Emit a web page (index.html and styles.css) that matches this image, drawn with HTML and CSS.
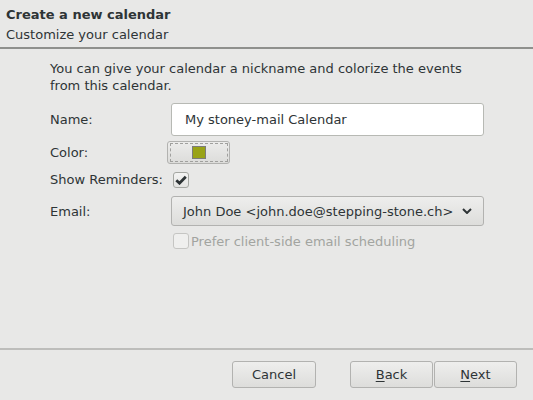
FILE: index.html
```html
<!DOCTYPE html>
<html>
<head>
<meta charset="utf-8">
<link rel="stylesheet" href="styles.css">
</head>
<body>
<div class="dialog">
  <header class="head">
    <div class="title">Create a new calendar</div>
    <div class="subtitle">Customize your calendar</div>
  </header>
  <main class="content">
    <p class="intro">You can give your calendar a nickname and colorize the events from this calendar.</p>
    <div class="form">
      <div class="row r-name">
        <div class="label">Name:</div>
        <div class="input">My stoney-mail Calendar</div>
      </div>
      <div class="row r-color">
        <div class="label">Color:</div>
        <div class="colorbtn"><div class="inner"><span class="swatch"></span></div></div>
      </div>
      <div class="row r-rem">
        <div class="label">Show Reminders:</div>
        <span class="check checked"><svg width="12" height="10" viewBox="0 0 12 10"><path d="M1.3 5.2 L4.5 8.2 L10.8 1.8" fill="none" stroke="#2e3436" stroke-width="2.8"/></svg></span>
      </div>
      <div class="row r-email">
        <div class="label">Email:</div>
        <div class="select"><span>John Doe &lt;john.doe@stepping-stone.ch&gt;</span><svg width="10" height="6" viewBox="0 0 10 6"><path d="M1 1 L5 5 L9 1" fill="none" stroke="#2e3436" stroke-width="2"/></svg></div>
      </div>
      <div class="row r-prefer">
        <div class="label"></div>
        <div class="prefer"><span class="check disabled"></span><span>Prefer client-side email scheduling</span></div>
      </div>
    </div>
  </main>
  <footer class="foot">
    <button class="btn cancel">Cancel</button>
    <div class="navpair">
      <button class="btn"><u>B</u>ack</button>
      <button class="btn"><u>N</u>ext</button>
    </div>
  </footer>
</div>
</body>
</html>
```
FILE: styles.css
```css
html, body {
  margin: 0;
  padding: 0;
}
body {
  width: 533px;
  height: 400px;
  background: #e8e8e7;
  font-family: "DejaVu Sans", sans-serif;
  font-size: 13px;
  color: #2e3436;
  overflow: hidden;
}
.dialog {
  display: flex;
  flex-direction: column;
  height: 400px;
}
.head {
  height: 49px;
  padding: 6px 0 0 6px;
  box-sizing: border-box;
  border-bottom: 2px solid #8f908d;
}
.title {
  font-weight: bold;
  line-height: 17px;
}
.subtitle {
  line-height: 17px;
  margin-top: 3px;
}
.content {
  flex: 1;
  padding: 11px 48px 0 50px;
  border-bottom: 2px solid #bdbdbb;
}
.intro {
  margin: 0;
  line-height: 17px;
  width: 440px;
}
.form {
  display: flex;
  flex-direction: column;
  margin-top: 9px;
}
.row {
  display: flex;
  align-items: center;
}
.label {
  width: 121px;
  flex: none;
  line-height: 17px;
}
.r-color { margin-top: 5px; }
.r-rem { margin-top: 7px; }
.r-email { margin-top: 8px; }
.r-prefer { margin-top: 7px; }
.input {
  width: 313px;
  height: 33px;
  box-sizing: border-box;
  background: #fff;
  border: 1px solid #b7b9b4;
  border-radius: 3px;
  padding: 0 13px;
  line-height: 31px;
}
.colorbtn {
  margin-left: -4px;
  width: 63px;
  height: 23px;
  box-sizing: border-box;
  border: 1px solid #b2b2b0;
  border-radius: 3px;
  background: linear-gradient(#ececeb, #dcdcda);
  padding: 1px 1px 1px 2px;
}
.colorbtn .inner {
  height: 19px;
  box-sizing: border-box;
  border: 1px dashed #a0a09e;
  display: flex;
  justify-content: center;
  align-items: center;
}
.swatch {
  width: 14px;
  height: 13px;
  box-sizing: border-box;
  background: #99a316;
  border: 1px solid #7c7c7a;
}
.check {
  width: 16px;
  height: 16px;
  box-sizing: border-box;
  border: 1px solid #a5a7a2;
  border-radius: 3px;
  background: linear-gradient(#f4f4f3, #e4e4e2);
  display: inline-flex;
  align-items: center;
  justify-content: center;
  margin-left: 2px;
  flex: none;
}
.check.disabled {
  border-color: #c5c5c3;
  background: #efefee;
}
.select {
  width: 313px;
  height: 30px;
  box-sizing: border-box;
  border: 1px solid #b2b2b0;
  border-radius: 3px;
  background: linear-gradient(#eeeeed, #dddddb);
  display: flex;
  align-items: center;
  justify-content: space-between;
  padding: 0 11px 0 11px;
  color: #2e3436;
}
.prefer {
  display: flex;
  align-items: center;
  gap: 2px;
  color: #a2a4a0;
}
.foot {
  height: 50px;
  display: flex;
  align-items: flex-start;
  padding-top: 11px;
  box-sizing: border-box;
  padding-left: 232px;
}
.btn {
  font-family: "DejaVu Sans", sans-serif;
  font-size: 13px;
  color: #2e3436;
  height: 27px;
  width: 84px;
  border: 1px solid #b2b2b0;
  border-radius: 3px;
  background: linear-gradient(#eeeeed, #dddddb);
  padding: 0;
}
.navpair {
  display: flex;
  gap: 1px;
  margin-left: 34px;
}
.navpair .btn {
  width: 83px;
}
.btn u {
  text-decoration-thickness: 1px;
  text-underline-offset: 2px;
}
```
